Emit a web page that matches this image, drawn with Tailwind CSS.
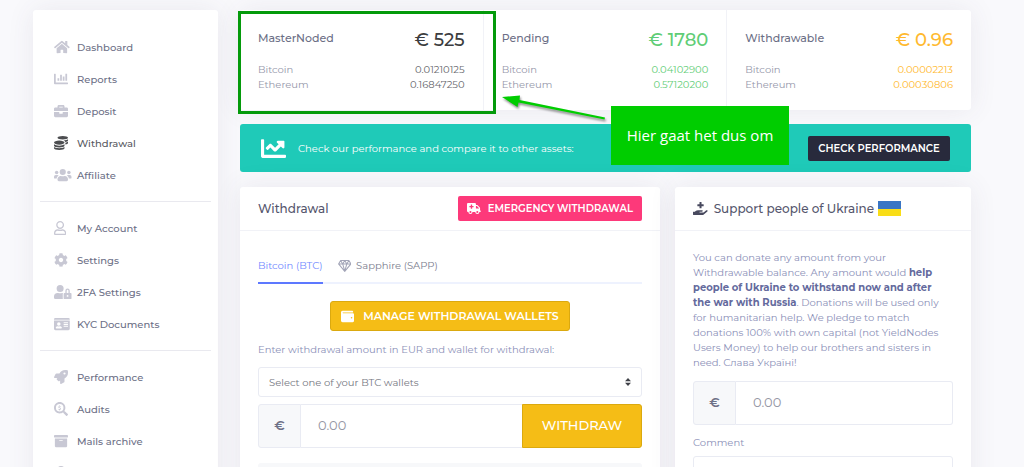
<!DOCTYPE html>
<html lang="en">
<head>
<meta charset="utf-8">
<meta name="viewport" content="width=device-width, initial-scale=1">
<title>Withdrawal</title>
<script src="https://cdn.jsdelivr.net/npm/@tailwindcss/browser@4"></script>
</head>
<body class="bg-[#f9f9fc] font-['Montserrat','Inter',sans-serif] text-[10px] text-[#6c6f86]">
<div class="relative flex h-screen items-start gap-[22px] overflow-hidden pt-[10px] pr-[53px] pl-[33px]">

  <!-- Sidebar -->
  <nav aria-label="Main" class="w-[185px] shrink-0 rounded-[3px] bg-white px-[7px] pt-[21px] pb-5 font-medium shadow-[0_0_28px_rgba(82,63,105,0.09)]">
    <ul class="[&_a]:flex [&_a]:h-8 [&_a]:items-center [&_a]:pl-[14px] [&_svg]:h-[14px] [&_svg]:w-auto [&_svg]:fill-[#c8c8d4] [&_span]:w-[23px]">
      <li><a href="#"><span><svg viewBox="0 0 576 512"><path d="M280.37 148.26L96 300.11V464a16 16 0 0 0 16 16l112.06-.29a16 16 0 0 0 15.92-16V368a16 16 0 0 1 16-16h64a16 16 0 0 1 16 16v95.64a16 16 0 0 0 16 16.05L464 480a16 16 0 0 0 16-16V300L295.67 148.26a12.19 12.19 0 0 0-15.3 0zM571.6 251.47L488 182.56V44.05a12 12 0 0 0-12-12h-56a12 12 0 0 0-12 12v72.61L318.47 43a48 48 0 0 0-61 0L4.34 251.47a12 12 0 0 0-1.6 16.9l25.5 31A12 12 0 0 0 45.15 301l235.22-193.74a12.19 12.19 0 0 1 15.3 0L530.9 301a12 12 0 0 0 16.9-1.6l25.5-31a12 12 0 0 0-1.7-16.93z"/></svg></span>Dashboard</a></li>
      <li><a href="#"><span><svg viewBox="0 0 512 512"><path d="M332.8 320h38.4c6.4 0 12.8-6.4 12.8-12.8V172.8c0-6.4-6.4-12.8-12.8-12.8h-38.4c-6.4 0-12.8 6.4-12.8 12.8v134.4c0 6.4 6.4 12.8 12.8 12.8zm96 0h38.4c6.4 0 12.8-6.4 12.8-12.8V76.8c0-6.4-6.4-12.8-12.8-12.8h-38.4c-6.4 0-12.8 6.4-12.8 12.8v230.4c0 6.4 6.4 12.8 12.8 12.8zm-288 0h38.4c6.4 0 12.8-6.4 12.8-12.8v-70.4c0-6.4-6.4-12.8-12.8-12.8h-38.4c-6.4 0-12.8 6.4-12.8 12.8v70.4c0 6.4 6.4 12.8 12.8 12.8zm96 0h38.4c6.4 0 12.8-6.4 12.8-12.8V108.8c0-6.4-6.4-12.8-12.8-12.8h-38.4c-6.4 0-12.8 6.4-12.8 12.8v198.4c0 6.4 6.4 12.8 12.8 12.8zM496 384H64V80c0-8.84-7.16-16-16-16H16C7.16 64 0 71.16 0 80v336c0 17.67 14.33 32 32 32h464c8.84 0 16-7.16 16-16v-32c0-8.84-7.16-16-16-16z"/></svg></span>Reports</a></li>
      <li><a href="#"><span><svg viewBox="0 0 512 512"><path d="M320 336c0 8.84-7.16 16-16 16h-96c-8.84 0-16-7.16-16-16v-48H0v144c0 25.6 22.4 48 48 48h416c25.6 0 48-22.4 48-48V288H320v48zm144-208h-80V80c0-25.6-22.4-48-48-48H176c-25.6 0-48 22.4-48 48v48H48c-25.6 0-48 22.4-48 48v80h512v-80c0-25.6-22.4-48-48-48zm-144 0H192V96h128v32z"/></svg></span>Deposit</a></li>
      <li><a href="#" aria-current="page" class="text-[#58595f]"><span><svg viewBox="0 0 512 512" class="fill-[#4c4d50]!"><path d="M0 405.3V448c0 35.3 86 64 192 64s192-28.7 192-64v-42.7C342.7 434.4 267.2 448 192 448S41.3 434.4 0 405.3zM320 128c106 0 192-28.7 192-64S426 0 320 0 128 28.7 128 64s86 64 192 64zM0 300.4V352c0 35.3 86 64 192 64s192-28.7 192-64v-51.6c-41.3 34-116.9 51.6-192 51.6S41.3 334.4 0 300.4zm416 11c57.3-11.1 96-31.7 96-55.4v-42.7c-23.2 16.4-57.3 27.6-96 34.5v63.6zM192 160C86 160 0 195.8 0 240s86 80 192 80 192-35.8 192-80-86-80-192-80zm219.3 56.3c60-10.8 100.7-32 100.7-56.3v-42.7c-35.5 25.1-96.5 38.6-160.7 41.8 29.5 14.3 51.2 33.5 60 57.2z"/></svg></span>Withdrawal</a></li>
      <li><a href="#"><span><svg viewBox="0 0 640 512"><circle cx="96" cy="160" r="64"/><circle cx="544" cy="160" r="64"/><circle cx="320" cy="144" r="112"/><path d="M0 352v-32a64 64 0 0 1 64-64h64c18 0 34 7 45 19-40 22-69 61-75 109H32a32 32 0 0 1-32-32zM640 352v-32a64 64 0 0 0-64-64h-64c-18 0-34 7-45 19 40 22 69 61 75 109h66a32 32 0 0 0 32-32zM128 432v-29c0-64 51-115 115-115h8c44 21 94 21 138 0h8c64 0 115 51 115 115v29a48 48 0 0 1-48 48H176a48 48 0 0 1-48-48z"/></svg></span>Affiliate</a></li>
      <li role="separator" class="my-[10px] h-px bg-[#e9e9ef]"></li>
      <li><a href="#"><span><svg viewBox="0 0 448 512"><path d="M313.6 304c-28.7 0-42.5 16-89.6 16-47.1 0-60.8-16-89.6-16C60.2 304 0 364.2 0 438.4V464c0 26.5 21.5 48 48 48h352c26.5 0 48-21.5 48-48v-25.6c0-74.2-60.2-134.4-134.4-134.4zM400 464H48v-25.6c0-47.6 38.8-86.4 86.4-86.4 14.6 0 38.3 16 89.6 16 51.7 0 74.9-16 89.6-16 47.6 0 86.4 38.8 86.4 86.4V464zM224 288c79.5 0 144-64.5 144-144S303.5 0 224 0 80 64.5 80 144s64.5 144 144 144zm0-240c52.9 0 96 43.1 96 96s-43.1 96-96 96-96-43.1-96-96 43.1-96 96-96z"/></svg></span>My Account</a></li>
      <li><a href="#"><span><svg viewBox="0 0 512 512"><path d="M487.4 315.7l-42.6-24.6c4.3-23.2 4.3-47 0-70.2l42.6-24.6c4.9-2.8 7.1-8.6 5.5-14-11.1-35.6-30-67.8-54.7-94.6-3.8-4.1-10-5.1-14.8-2.3L380.8 110c-17.9-15.4-38.5-27.3-60.8-35.1V25.8c0-5.6-3.9-10.5-9.4-11.7-36.7-8.2-74.3-7.8-109.2 0-5.5 1.2-9.4 6.1-9.4 11.7V75c-22.2 7.9-42.8 19.8-60.8 35.1L88.7 85.5c-4.9-2.8-11-1.9-14.8 2.3-24.7 26.7-43.6 58.9-54.7 94.6-1.7 5.4.6 11.2 5.5 14L67.3 221c-4.3 23.2-4.3 47 0 70.2l-42.6 24.6c-4.9 2.8-7.1 8.6-5.5 14 11.1 35.6 30 67.8 54.7 94.6 3.8 4.1 10 5.1 14.8 2.3l42.6-24.6c17.9 15.4 38.5 27.3 60.8 35.1v49.2c0 5.6 3.9 10.5 9.4 11.7 36.7 8.2 74.3 7.8 109.2 0 5.5-1.2 9.4-6.1 9.4-11.7v-49.2c22.2-7.9 42.8-19.8 60.8-35.1l42.6 24.6c4.9 2.8 11 1.9 14.8-2.3 24.7-26.7 43.6-58.9 54.7-94.6 1.5-5.5-.7-11.3-5.6-14.1zM256 336c-44.1 0-80-35.9-80-80s35.9-80 80-80 80 35.9 80 80-35.9 80-80 80z"/></svg></span>Settings</a></li>
      <li><a href="#"><span><svg viewBox="0 0 640 512"><path d="M224 256A128 128 0 1 0 96 128a128 128 0 0 0 128 128zm96 64a63.08 63.08 0 0 1 8.1-30.5c-4.8-.5-9.5-1.5-14.5-1.5h-16.7a174.08 174.08 0 0 1-145.8 0h-16.7A134.43 134.43 0 0 0 0 422.4V464a48 48 0 0 0 48 48h280.9a63.54 63.54 0 0 1-8.9-32zm288-32h-32v-80a80 80 0 0 0-160 0v80h-32a32 32 0 0 0-32 32v160a32 32 0 0 0 32 32h224a32 32 0 0 0 32-32V320a32 32 0 0 0-32-32zM496 432a32 32 0 1 1 32-32 32 32 0 0 1-32 32zm32-144h-64v-80a32 32 0 0 1 64 0z"/></svg></span>2FA Settings</a></li>
      <li><a href="#"><span><svg viewBox="0 0 576 512"><path fill-rule="evenodd" d="M48 32h480a48 48 0 0 1 48 48v16H0V80a48 48 0 0 1 48-48zM0 128h576v304a48 48 0 0 1-48 48H48a48 48 0 0 1-48-48zM176 192a64 64 0 1 0 0 128 64 64 0 0 0 0-128zM64 397c0 11 9 19 20 19h184c11 0 20-8 20-19 0-34-26-61-60-61-16 0-24 8-52 8s-36-8-52-8c-34 0-60 27-60 61zM352 200v16a8 8 0 0 0 8 8h144a8 8 0 0 0 8-8v-16a8 8 0 0 0-8-8H360a8 8 0 0 0-8 8zM352 264v16a8 8 0 0 0 8 8h144a8 8 0 0 0 8-8v-16a8 8 0 0 0-8-8H360a8 8 0 0 0-8 8zM352 328v16a8 8 0 0 0 8 8h144a8 8 0 0 0 8-8v-16a8 8 0 0 0-8-8H360a8 8 0 0 0-8 8z"/></svg></span>KYC Documents</a></li>
      <li role="separator" class="my-[10px] h-px bg-[#e9e9ef]"></li>
      <li><a href="#"><span><svg viewBox="0 0 512 512"><path d="M505.12 19.09c-1.19-5.53-6.66-11-12.21-12.19C460.72 0 435.51 0 410.41 0 307.18 0 245.27 55.2 199.05 128H94.84c-16.35.02-35.56 11.88-42.89 26.48L2.52 253.3A28.4 28.4 0 0 0 0 264a24 24 0 0 0 24 24h103.82l-22.48 22.47c-11.36 11.36-13 32.26 0 45.25l50.91 50.91c11.15 11.18 32.15 13.15 45.27 0L224 384.16V488a24 24 0 0 0 24 24 28.56 28.56 0 0 0 10.71-2.52l98.73-49.39c14.63-7.29 26.5-26.5 26.5-42.86V312.8C456.6 266.48 512 204.39 512 101.7c.07-25.2.07-50.4-6.88-82.61zM384 168a40 40 0 1 1 40-40 40 40 0 0 1-40 40z"/></svg></span>Performance</a></li>
      <li><a href="#"><span><svg viewBox="0 0 512 512"><path fill-rule="evenodd" d="M505 443L405 343c-4-4-10-7-17-7h-16c28-35 44-80 44-128C416 93 323 0 208 0S0 93 0 208s93 208 208 208c48 0 93-16 128-44v16c0 7 3 13 7 17l100 100c9 9 24 9 34 0l28-28c9-10 9-25 0-34zM208 346a138 138 0 1 1 0-276 138 138 0 0 1 0 276z"/><path d="M239 175c-8-5-18-9-30-9-17 0-26 7-26 16 0 23 73 12 73 62 0 23-16 36-36 40v24h-24v-24c-15-2-28-7-38-14l13-24c10 7 22 11 34 11 15 0 23-5 23-13 0-24-73-13-73-61 0-22 16-37 41-41v-24h24v24c13 2 24 6 33 11z"/></svg></span>Audits</a></li>
      <li><a href="#"><span><svg viewBox="0 0 512 512"><path d="M32 448c0 17.7 14.3 32 32 32h384c17.7 0 32-14.3 32-32V160H32v288zm160-212c0-6.6 5.4-12 12-12h104c6.6 0 12 5.4 12 12v8c0 6.6-5.4 12-12 12H204c-6.6 0-12-5.4-12-12v-8zM480 32H32C14.3 32 0 46.3 0 64v48c0 8.8 7.2 16 16 16h480c8.8 0 16-7.2 16-16V64c0-17.7-14.3-32-32-32z"/></svg></span>Mails archive</a></li>
      <li><a href="#" aria-label="Support"><span><svg viewBox="0 0 512 512"><circle cx="256" cy="128" r="128"/><path d="M64 512V416a128 128 0 0 1 128-128h128a128 128 0 0 1 128 128v96z"/></svg></span></a></li>
    </ul>
  </nav>

  <main class="flex min-w-0 flex-1 flex-col">
    <!-- Balances -->
    <section class="grid grid-cols-3 divide-x divide-[#f1f2f7] rounded-[3px] bg-white shadow-[0_0_28px_rgba(82,63,105,0.09)]">
      <div class="px-[18px] pt-[18px] pb-[18px]">
        <div class="flex items-start justify-between"><h2 class="text-[11px] leading-5 font-medium">MasterNoded</h2><p class="text-[18px] leading-6 font-medium text-[#3c3d40]">€ 525</p></div>
        <dl class="mt-[10px] grid grid-cols-2 leading-[15px] text-[#9597aa]"><dt>Bitcoin</dt><dd class="text-right text-[#66676c]">0.01210125</dd><dt>Ethereum</dt><dd class="text-right text-[#66676c]">0.16847250</dd></dl>
      </div>
      <div class="px-[18px] pt-[18px] pb-[18px]">
        <div class="flex items-start justify-between"><h2 class="text-[11px] leading-5 font-medium">Pending</h2><p class="text-[18px] leading-6 font-medium text-[#5fcd76]">€ 1780</p></div>
        <dl class="mt-[10px] grid grid-cols-2 leading-[15px] text-[#9597aa]"><dt>Bitcoin</dt><dd class="text-right text-[#5fcd76]">0.04102900</dd><dt>Ethereum</dt><dd class="text-right text-[#5fcd76]">0.57120200</dd></dl>
      </div>
      <div class="px-[18px] pt-[18px] pb-[18px]">
        <div class="flex items-start justify-between"><h2 class="text-[11px] leading-5 font-medium">Withdrawable</h2><p class="text-[18px] leading-6 font-medium text-[#ffb92e]">€ 0.96</p></div>
        <dl class="mt-[10px] grid grid-cols-2 leading-[15px] text-[#9597aa]"><dt>Bitcoin</dt><dd class="text-right text-[#ffb92e]">0.00002213</dd><dt>Ethereum</dt><dd class="text-right text-[#ffb92e]">0.00030806</dd></dl>
      </div>
    </section>

    <!-- Performance banner -->
    <section class="mt-[14px] flex h-12 items-center rounded-[3px] bg-[#1fcab8] px-[21px] text-white">
      <svg viewBox="0 0 512 512" class="size-[25px] fill-white"><path d="M496 384H64V80c0-8.84-7.16-16-16-16H16C7.16 64 0 71.16 0 80v336c0 17.67 14.33 32 32 32h464c8.84 0 16-7.16 16-16v-32c0-8.84-7.16-16-16-16zM464 96H345.94c-21.38 0-32.09 25.85-16.97 40.97l32.4 32.4L288 242.75l-73.37-73.37c-12.5-12.5-32.76-12.5-45.25 0l-68.69 68.69c-6.25 6.25-6.25 16.38 0 22.63l22.62 22.62c6.25 6.25 16.38 6.25 22.63 0L192 237.25l73.37 73.37c12.5 12.5 32.76 12.5 45.25 0l96-96 32.4 32.4c15.12 15.12 40.97 4.41 40.97-16.97V112c.01-8.84-7.15-16-15.99-16z"/></svg>
      <p class="ml-3 flex-1">Check our performance and compare it to other assets:</p>
      <button class="h-[25px] w-[142px] rounded-[2px] bg-[#282a3c] text-[10px] font-semibold">CHECK PERFORMANCE</button>
    </section>

    <div class="mt-[15px] grid grid-cols-[minmax(0,420fr)_minmax(0,296fr)] items-start gap-[15px]">
      <!-- Withdrawal form -->
      <section class="rounded-[3px] bg-white pb-10 shadow-[0_0_28px_rgba(82,63,105,0.09)]">
        <header class="flex h-11 items-center justify-between border-b border-[#f1f2f7] px-[18px]">
          <h2 class="text-[12px] font-medium text-[#55566d]">Withdrawal</h2>
          <button class="flex h-[25px] w-[184px] items-center justify-center gap-[7px] rounded-[2px] bg-[#fd397a] text-[10px] font-semibold text-white">
            <svg viewBox="0 0 640 512" class="h-[11px] fill-white"><path fill-rule="evenodd" d="M48 0h320a48 48 0 0 1 48 48v48h44c13 0 25 5 34 14l100 100c9 9 14 21 14 34v108h16a16 16 0 0 1 16 16v32a16 16 0 0 1-16 16h-48a96 96 0 0 1-192 0H256a96 96 0 0 1-192 0H48a48 48 0 0 1-48-48V48A48 48 0 0 1 48 0zM416 144v112h144v-12L460 144zM160 368a48 48 0 1 0 0 96 48 48 0 0 0 0-96zM480 368a48 48 0 1 0 0 96 48 48 0 0 0 0-96zM176 80v56h-56a8 8 0 0 0-8 8v48a8 8 0 0 0 8 8h56v56a8 8 0 0 0 8 8h48a8 8 0 0 0 8-8v-56h56a8 8 0 0 0 8-8v-48a8 8 0 0 0-8-8h-56V80a8 8 0 0 0-8-8h-48a8 8 0 0 0-8 8z"/></svg>
            EMERGENCY WITHDRAWAL
          </button>
        </header>
        <div class="px-[18px] pt-[18px]">
          <div role="tablist" class="flex h-[35px] gap-[15px] border-b-2 border-[#eef2fe]">
            <button role="tab" aria-selected="true" class="-mb-[2px] border-b-2 border-[#5d78ff] pb-px text-[#7189ff]">Bitcoin (BTC)</button>
            <button role="tab" aria-selected="false" class="flex items-center gap-[5px] text-[#7b7d8e]">
              <svg viewBox="0 0 576 512" class="h-3 fill-none stroke-[#a3a5b8] stroke-[44]" stroke-linejoin="round"><path d="M112 24h352l88 144-264 320L24 168zM24 168h528M200 168l88 310 88-310M112 24l88 144 88-144 88 144 88-144"/></svg>
              Sapphire (SAPP)
            </button>
          </div>
          <a href="#" class="mx-auto mt-[17px] flex h-[30px] w-[240px] items-center justify-center gap-[9px] rounded-[3px] border border-[#dba90f] bg-[#f5bd16] text-[11px] font-semibold text-white">
            <svg viewBox="0 0 512 512" class="h-[13px] fill-white"><path d="M461.2 128H80c-8.84 0-16-7.16-16-16s7.16-16 16-16h384c8.84 0 16-7.16 16-16 0-26.51-21.49-48-48-48H64C28.65 32 0 60.65 0 96v320c0 35.35 28.65 64 64 64h397.2c28.02 0 50.8-21.53 50.8-48V176c0-26.47-22.78-48-50.8-48zM416 336c-17.67 0-32-14.33-32-32s14.33-32 32-32 32 14.33 32 32-14.33 32-32 32z"/></svg>
            MANAGE WITHDRAWAL WALLETS
          </a>
          <label for="wallet" class="mt-[11px] block leading-4 text-[#8b90b8]">Enter withdrawal amount in EUR and wallet for withdrawal:</label>
          <div class="relative mt-[9px]">
            <select id="wallet" class="block h-[30px] w-full appearance-none rounded-[3px] border border-[#e9ebf3] bg-white px-[10px] text-[#75777f]"><option>Select one of your BTC wallets</option></select>
            <svg viewBox="0 0 6 8" class="pointer-events-none absolute top-[11px] right-[11px] h-2 w-[6px] fill-[#3f4147]"><path d="M3 0l3 3.3H0zM3 8L0 4.700h6z"/></svg>
          </div>
          <div class="mt-[7px] flex h-11">
            <label for="amount" class="flex w-[43px] items-center justify-center rounded-l-[3px] border border-[#e9ebf3] bg-[#f7f8fa] text-[13px] font-semibold text-[#6f7187]">€</label>
            <input id="amount" placeholder="0.00" class="min-w-0 flex-1 border-y border-[#e9ebf3] px-[17px] text-[13px] placeholder:text-[#9495a3]">
            <button class="w-[120px] rounded-r-[3px] border border-[#dba90f] bg-[#f5bd16] text-[13px] font-medium text-white">WITHDRAW</button>
          </div>
          <div class="mt-[15px] h-10 rounded-[3px] bg-[#f7f8fa]"></div>
        </div>
      </section>

      <!-- Donation form -->
      <section class="rounded-[3px] bg-white pb-10 shadow-[0_0_28px_rgba(82,63,105,0.09)]">
        <header class="flex h-11 items-center border-b border-[#f1f2f7] px-[18px]">
          <svg viewBox="0 0 576 512" class="h-[13px] fill-[#48495e]"><path d="M565.3 328.1c-11.8-10.7-30.2-10-42.6 0L430.3 402c-11.3 9.1-25.4 14-40 14H272c-8.8 0-16-7.2-16-16s7.2-16 16-16h78.3c15.9 0 30.7-10.9 33.3-26.6 3.3-20-12.1-37.4-31.6-37.4H192c-27 0-53.1 9.3-74.1 26.3L71.4 384H16c-8.8 0-16 7.2-16 16v96c0 8.8 7.2 16 16 16h356.8c14.5 0 28.6-4.9 40-14L564 377c15.200-12.100 16.400-35.300 1.300-48.900zM256 10a10 10 0 0 1 10-10h60a10 10 0 0 1 10 10v74h74a10 10 0 0 1 10 10v60a10 10 0 0 1-10 10h-74v74a10 10 0 0 1-10 10h-60a10 10 0 0 1-10-10v-74h-74a10 10 0 0 1-10-10V94a10 10 0 0 1 10-10h74z"/></svg>
          <h2 class="ml-[6px] text-[12px] font-medium text-[#55566d]">Support people of Ukraine</h2>
          <svg viewBox="0 0 23 15" class="ml-1 h-[15px] w-[23px]" role="img" aria-label="Flag of Ukraine"><path fill="#3a75c4" d="M0 0h23v8H0z"/><path fill="#f9dd16" d="M0 8h23v7H0z"/></svg>
        </header>
        <div class="px-[18px] pt-[19px] text-[#8b90b8]">
          <p class="leading-[15px]">You can donate any amount from your<br>Withdrawable balance. Any amount would <strong class="font-bold text-[#646a9d]">help<br>people of Ukraine to withstand now and after<br>the war with Russia</strong>. Donations will be used only<br>for humanitarian help. We pledge to match<br>donations 100% with own capital (not YieldNodes<br>Users Money) to help our brothers and sisters in<br>need. Слава Україні!</p>
          <div class="mt-[11px] flex h-11">
            <label for="donation" class="flex w-[43px] items-center justify-center rounded-l-[3px] border border-[#e9ebf3] bg-[#f7f8fa] text-[13px] font-semibold text-[#6f7187]">€</label>
            <input id="donation" placeholder="0.00" class="min-w-0 flex-1 rounded-r-[3px] border border-l-0 border-[#e9ebf3] px-[17px] text-[13px] placeholder:text-[#9495a3]">
          </div>
          <label for="comment" class="mt-[10px] block leading-4">Comment</label>
          <textarea id="comment" class="mt-[5px] block h-16 w-full resize-none rounded-[3px] border border-[#e9ebf3]"></textarea>
        </div>
      </section>
    </div>
  </main>

  <!-- Annotation overlay -->
  <div class="pointer-events-none absolute top-[11px] left-[238px] h-[103px] w-[258px] border-3 border-[#049a0b]"></div>
  <svg viewBox="0 0 110 32" class="pointer-events-none absolute top-[92px] left-[500px] h-8 w-[110px] drop-shadow-[1px_2px_1px_rgba(0,0,0,0.45)]"><path fill="#00cd00" d="M2 5L20 3.500 19.500 8 105 25.500 104.500 27.500 18.500 10.500 17.500 15z"/></svg>
  <div class="absolute top-[106px] left-[611px] flex h-[59px] w-[178px] items-center justify-center bg-[#00cd00] font-['Open_Sans',sans-serif] text-[15px] text-white">Hier gaat het dus om</div>
</div>
</body>
</html>
